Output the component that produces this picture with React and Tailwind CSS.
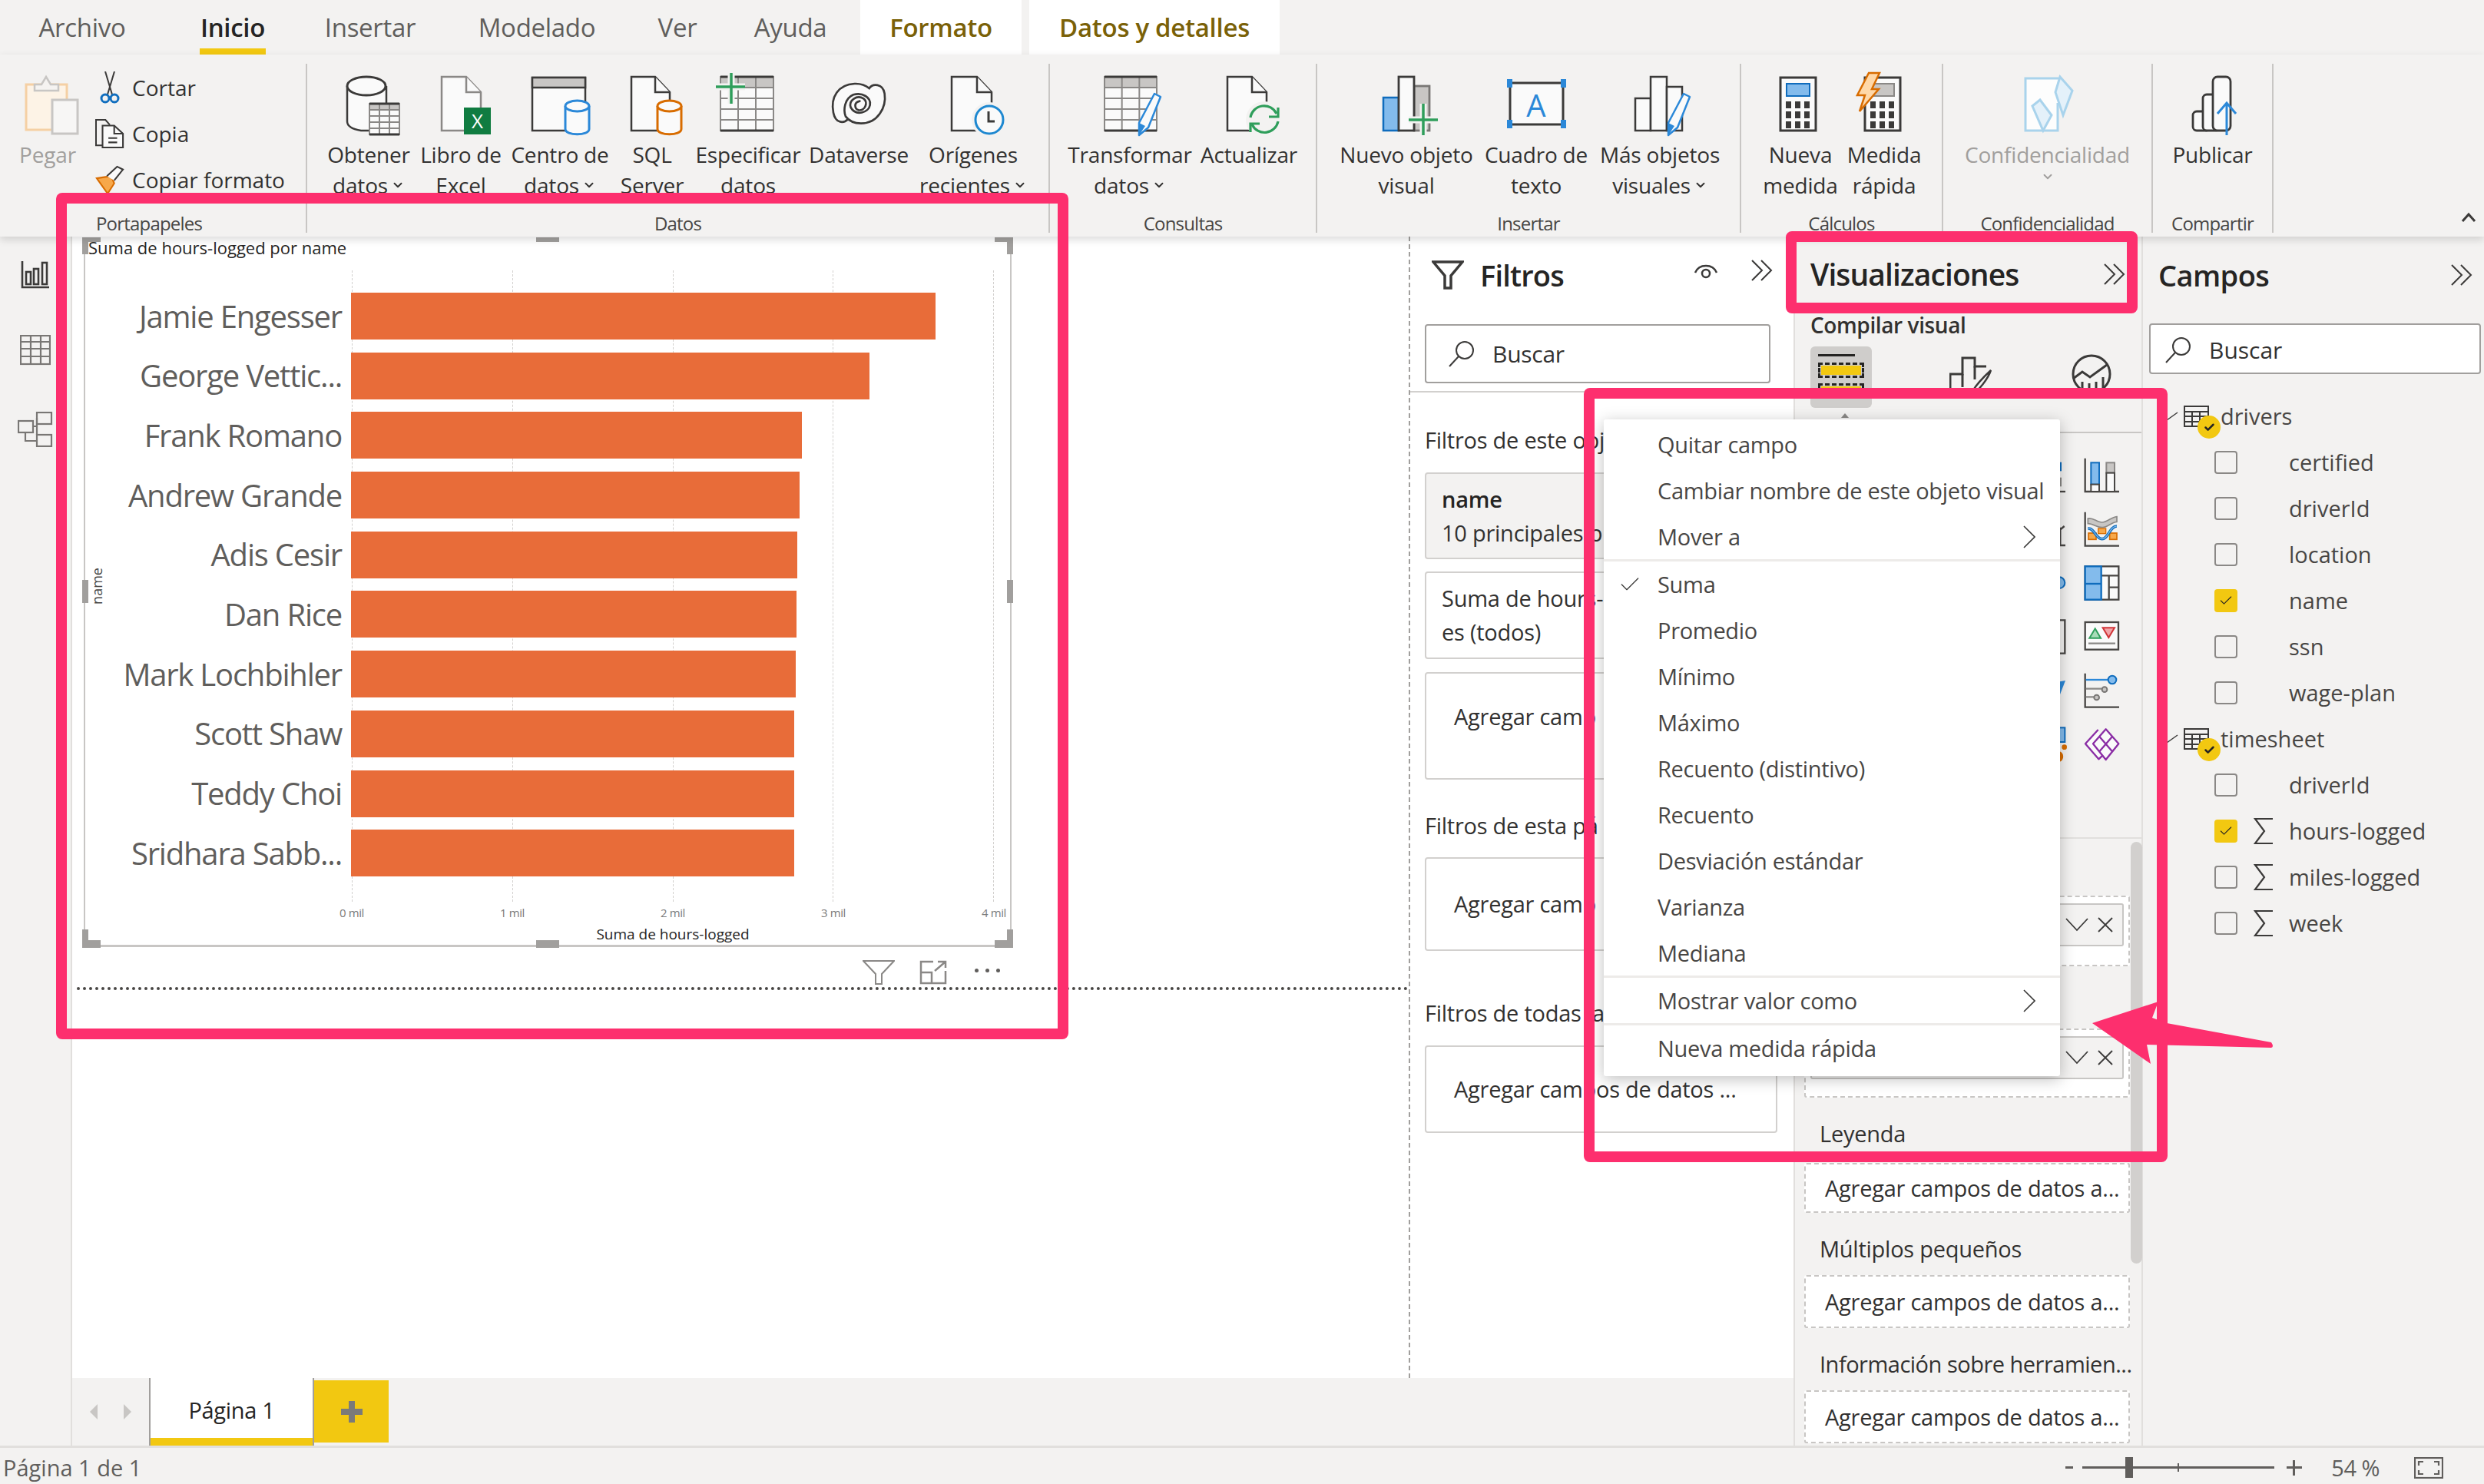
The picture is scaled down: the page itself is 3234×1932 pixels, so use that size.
import React from "react";
import { ChevronDown, Check } from "lucide-react";

const D = "#3b3a39";
const M = "#8a8886";
const L = "#c8c6c4";
const BLUE = "#2b88d8";
const DEEP = "#0f6cbd";
const SKY = "#83bbec";
const GREEN = "#2f9e5b";
const ORANGE = "#d86c00";
const PAPER = "#fafafa";
const BG = "#f3f2f1";

const Box = ({ children }) => (
  <svg width="80" height="80" viewBox="0 0 80 80" fill="none" className="overflow-visible">
    {children}
  </svg>
);

const Doc = ({ x, w = 50, h = 70, c = D }) => (
  <g fill={PAPER} stroke={c} strokeWidth="2.5">
    <path d={`M${x} 2H${x + w - 19}L${x + w} 22V${h + 2}H${x}Z`} strokeLinejoin="miter" />
    <path d={`M${x + w - 19} 2V22H${x + w}`} />
  </g>
);

const Cyl = ({ x, w = 31, c = BLUE }) => (
  <g fill={PAPER} stroke={c} strokeWidth="3">
    <path d={`M${x} 40V70C${x} 79 ${x + w} 79 ${x + w} 70V40`} />
    <ellipse cx={x + w / 2} cy="40" rx={w / 2} ry="7" />
  </g>
);

const Pencil = ({ dx = 0 }) => (
  <g transform={`translate(${dx} 0)`} strokeLinejoin="round">
    <path d="M72 24L80 28L64 68L52 78L52 62Z" fill={PAPER} stroke={BLUE} strokeWidth="2.5" />
    <path d="M52 62L60 66L52 78Z" fill={BLUE} />
  </g>
);

const Grid = ({ x, w, y = 2, h = 70, cols = 3, rows = 4 }) => (
  <g fill={PAPER} stroke={M} strokeWidth="2">
    <rect x={x} y={y} width={w} height={h} />
    <rect x={x} y={y} width={w} height={h / 5} fill={L} />
    {Array.from({ length: cols - 1 }).map((_, i) => (
      <line key={i} x1={x + ((i + 1) * w) / cols} x2={x + ((i + 1) * w) / cols} y1={y} y2={y + h} />
    ))}
    {Array.from({ length: rows - 1 }).map((_, i) => (
      <line key={i} x1={x} x2={x + w} y1={y + h / 5 + ((i + 1) * (h * 0.8)) / rows} y2={y + h / 5 + ((i + 1) * (h * 0.8)) / rows} />
    ))}
    <path d={`M${x} ${y}H${x + w}M${x} ${y + h}H${x + w}`} stroke={D} strokeWidth="3" />
  </g>
);

const Calc = ({ x, blue }) => (
  <g>
    <rect x={x} y="3" width="46" height="69" fill={PAPER} stroke={D} strokeWidth="3" />
    <rect x={x + 8} y="11" width="30" height="16" fill={blue ? SKY : L} stroke={blue ? DEEP : M} strokeWidth="2" />
    {[34, 47, 60].map((y) => (
      <g key={y} fill={D}>
        <rect x={x + 7} y={y} width="7" height="9" />
        <rect x={x + 19} y={y} width="7" height="9" />
        <rect x={x + 31} y={y} width="7" height="9" />
      </g>
    ))}
  </g>
);

const ICONS = {
  obtener: (
    <Box>
      <path d="M12 14V60C12 66 18 70 30 72H44V40H63V14" fill={PAPER} stroke={D} strokeWidth="2.5" />
      <ellipse cx="37" cy="14" rx="25" ry="12" fill={PAPER} stroke={D} strokeWidth="3" />
      <Grid x={41} w={39} y={37} h={40} />
    </Box>
  ),
  excel: (
    <Box>
      <Doc x={15} w={51} c={M} />
      <rect x="44" y="42" width="35" height="35" fill="#107c41" />
      <text x="61.5" y="69" textAnchor="middle" fontSize="26" fill="#fff" fontFamily="Open Sans">X</text>
    </Box>
  ),
  centro: (
    <Box>
      <rect x="4" y="3" width="69" height="69" fill={PAPER} stroke={D} strokeWidth="2.5" />
      <rect x="4" y="3" width="69" height="13" fill={L} stroke={D} strokeWidth="2.5" />
      <Cyl x={47} />
    </Box>
  ),
  sql: (
    <Box>
      <Doc x={13} />
      <Cyl x={47} c={ORANGE} />
    </Box>
  ),
  especificar: (
    <Box>
      <Grid x={4} w={69} />
      <path d="M18 -3V37M-2 15H36" stroke={BG} strokeWidth="9" />
      <path d="M18 -3V37M-2 15H36" stroke={GREEN} strokeWidth="3.5" />
    </Box>
  ),
  dataverse: (
    <Box>
      <g transform="translate(-7 -8) scale(0.3333)" stroke={D} strokeWidth="8" strokeLinecap="round">
        <path
          d="M100 195C80 215 50 210 42 170C30 110 60 60 125 57C150 56 170 65 182 75C195 55 235 55 242 95C250 150 215 212 150 212C125 212 105 205 90 185C80 160 85 115 120 100C155 90 190 110 185 140C180 170 130 185 110 150C100 120 135 100 160 115C180 130 165 165 140 160C125 155 120 130 145 125"
          fill={PAPER}
        />
      </g>
    </Box>
  ),
  origenes: (
    <Box>
      <Doc x={12} w={52} />
      <circle cx="61" cy="58" r="23" fill={BG} />
      <circle cx="61" cy="58" r="18" fill={PAPER} stroke="#1e88d0" strokeWidth="3" />
      <path d="M60 47V60H68" stroke={D} strokeWidth="3" />
    </Box>
  ),
  transformar: (
    <Box>
      <Grid x={7} w={68} />
      <Pencil />
    </Box>
  ),
  actualizar: (
    <Box>
      <Doc x={12} w={51} />
      <circle cx="60" cy="58" r="24" fill={BG} />
      <g stroke={GREEN} strokeWidth="3.2" fill="none">
        <path d="M42 55A18 18 0 0 1 76 50" />
        <path d="M78 42V54H66" />
        <path d="M78 60A18 18 0 0 1 44 64" />
        <path d="M42 74V63H54" />
      </g>
    </Box>
  ),
  nuevo: (
    <Box>
      <rect x="50" y="14" width="20" height="58" fill={L} stroke="#797775" strokeWidth="2.8" />
      <rect x="10" y="29" width="20" height="43" fill={SKY} stroke={DEEP} strokeWidth="2.5" />
      <rect x="30" y="2" width="20" height="70" fill={PAPER} stroke={D} strokeWidth="2.8" />
      <path d="M62 37V78M43 58H81" stroke={BG} strokeWidth="9" />
      <path d="M62 37V78M43 58H81" stroke={GREEN} strokeWidth="3.5" />
    </Box>
  ),
  cuadro: (
    <Box>
      <rect x="6" y="10" width="69" height="54" fill={PAPER} stroke={D} strokeWidth="3" />
      <g fill={BLUE}>
        <rect x="2" y="5" width="7" height="11" />
        <rect x="72" y="5" width="7" height="11" />
        <rect x="2" y="58" width="7" height="11" />
        <rect x="72" y="58" width="7" height="11" />
      </g>
      <text x="40" y="54" textAnchor="middle" fontSize="40" fill={BLUE} fontFamily="Open Sans">A</text>
    </Box>
  ),
  mas: (
    <Box>
      <g stroke={D} strokeWidth="2.5" fill={PAPER}>
        <rect x="8" y="30" width="20" height="42" />
        <rect x="28" y="2" width="21" height="70" />
        <rect x="49" y="15" width="20" height="57" />
      </g>
      <Pencil dx={-1} />
    </Box>
  ),
  medida: (
    <Box>
      <Calc x={14} blue />
    </Box>
  ),
  rapida: (
    <Box>
      <Calc x={15} />
      <path d="M20 -3H34L24 18H33L8 47L15 26H5Z" fill="#ffd8a8" stroke={ORANGE} strokeWidth="2.5" strokeLinejoin="miter" />
    </Box>
  ),
  confid: (
    <Box>
      <path d="M54 4H11V72H53V36" fill="#fdfdfd" stroke="#a9d3ec" strokeWidth="3" />
      <path d="M56 2L72 20L60 52L50 22ZM30 32L45 52L34 72L20 40Z" fill="#e4f1fa" stroke="#a9d3ec" strokeWidth="3" />
    </Box>
  ),
  publicar: (
    <Box>
      <g fill={PAPER} stroke={D} strokeWidth="2.8">
        <rect x="14" y="47" width="22" height="25" rx="5" />
        <rect x="27" y="25" width="22" height="47" rx="5" />
        <rect x="40" y="2" width="23" height="70" rx="6" />
      </g>
      <path d="M58 78V36M46 50L58 36L70 50" stroke={BLUE} strokeWidth="3" fill="none" />
    </Box>
  ),
};

const GROUPS = [
  {
    label: "Datos",
    w: "w-[967px]",
    pad: "pl-[20px]",
    items: [
      { w: "w-[120px]", icon: "obtener", lines: ["Obtener", "datos"], caret: true },
      { w: "w-[120px]", icon: "excel", lines: ["Libro de", "Excel"] },
      { w: "w-[138px]", icon: "centro", lines: ["Centro de", "datos"], caret: true },
      { w: "w-[102px]", icon: "sql", lines: ["SQL", "Server"] },
      { w: "w-[148px]", icon: "especificar", lines: ["Especificar", "datos"] },
      { w: "w-[140px]", icon: "dataverse", lines: ["Dataverse"] },
      { w: "w-[158px]", icon: "origenes", lines: ["Orígenes", "recientes"], caret: true },
    ],
  },
  {
    label: "Consultas",
    w: "w-[348px]",
    pad: "pl-[24px]",
    items: [
      { w: "w-[160px]", icon: "transformar", lines: ["Transformar", "datos"], caret: true },
      { w: "w-[150px]", icon: "actualizar", lines: ["Actualizar"] },
    ],
  },
  {
    label: "Insertar",
    w: "w-[552px]",
    pad: "pl-[26px]",
    items: [
      { w: "w-[180px]", icon: "nuevo", lines: ["Nuevo objeto", "visual"] },
      { w: "w-[158px]", icon: "cuadro", lines: ["Cuadro de", "texto"] },
      { w: "w-[164px]", icon: "mas", lines: ["Más objetos", "visuales"], caret: true },
    ],
  },
  {
    label: "Cálculos",
    w: "w-[263px]",
    pad: "pl-[24px]",
    items: [
      { w: "w-[106px]", icon: "medida", lines: ["Nueva", "medida"] },
      { w: "w-[112px]", icon: "rapida", lines: ["Medida", "rápida"] },
    ],
  },
  {
    label: "Confidencialidad",
    w: "w-[273px]",
    pad: "",
    items: [{ w: "w-[272px]", icon: "confid", lines: ["Confidencialidad", ""], caret: true, muted: true }],
  },
  {
    label: "Compartir",
    w: "w-[157px]",
    pad: "",
    items: [{ w: "w-[156px]", icon: "publicar", lines: ["Publicar"] }],
  },
];

const Caret = ({ muted }) => (
  <ChevronDown size={18} strokeWidth={2.5} className={muted ? "text-[#a19f9d]" : "text-[#323130]"} />
);

function RibbonButton({ item }) {
  return (
    <div className={`${item.w} flex flex-col items-center`}>
      {ICONS[item.icon]}
      <div className={`mt-[3px] flex flex-col items-center whitespace-nowrap text-[28px] leading-[40px] tracking-[-0.2px] ${item.muted ? "text-[#a19f9d]" : "text-[#323130]"}`}>
        {item.lines.map((line, i) => (
          <span key={i} className="flex items-center gap-[4px]">
            {line}
            {item.caret && i === 1 && <Caret muted={item.muted} />}
          </span>
        ))}
      </div>
    </div>
  );
}

function RibbonGroup({ label, w, pad, items }) {
  return (
    <div className={`${w} h-[220px] flex flex-col border-r-2 border-[#c8c6c4]`}>
      <div className={`flex pt-[15px] ${pad} ${pad ? "" : "justify-center"}`}>
        {items.map((item) => (
          <RibbonButton key={item.icon} item={item} />
        ))}
      </div>
      <div className="mt-auto pb-[2px] text-center text-[24px] leading-[20px] tracking-[-0.8px] text-[#484644]">{label}</div>
    </div>
  );
}

const TABS = [
  { label: "Archivo", w: "w-[214px]", cls: "text-[#605e5c]" },
  { label: "Inicio", w: "w-[178px]", cls: "text-[#252423] font-semibold", active: true },
  { label: "Insertar", w: "w-[180px]", cls: "text-[#605e5c]" },
  { label: "Modelado", w: "w-[254px]", cls: "text-[#605e5c]" },
  { label: "Ver", w: "w-[112px]", cls: "text-[#605e5c]" },
  { label: "Ayuda", w: "w-[182px]", cls: "text-[#605e5c]" },
  { label: "Formato", w: "w-[210px]", cls: "bg-white text-[#7a6108] font-semibold" },
  { label: "Datos y detalles", w: "w-[326px] ml-[10px]", cls: "bg-white text-[#7a6108] font-semibold" },
];

function TabBar() {
  return (
    <div className="flex h-[71px] shrink-0">
      {TABS.map((t) => (
        <div key={t.label} className={`${t.w} ${t.cls} relative flex items-center justify-center text-[33px] tracking-[-0.3px]`}>
          {t.label}
          {t.active && <div className="absolute bottom-0 left-[46px] h-[8px] w-[86px] bg-[#f2c811]" />}
        </div>
      ))}
    </div>
  );
}

function Clipboard() {
  const rows = [
    {
      text: "Cortar",
      icon: (
        <svg width="30" height="42" viewBox="0 0 30 42" fill="none">
          <path d="M9 0L18 30M21 0L12 30" stroke={D} strokeWidth="2" />
          <circle cx="9" cy="35" r="5" stroke="#106ebe" strokeWidth="3" />
          <circle cx="21" cy="35" r="5" stroke="#106ebe" strokeWidth="3" />
        </svg>
      ),
    },
    {
      text: "Copia",
      icon: (
        <svg width="40" height="40" viewBox="0 0 40 40" fill="none" stroke={D} strokeWidth="2.2">
          <path d="M10 36H1V1H14L20 8" />
          <path d="M10 9H26L38 20V39H10Z" fill={PAPER} />
          <path d="M26 9V20H38M18 26H30M18 32H30" />
        </svg>
      ),
    },
    {
      text: "Copiar formato",
      icon: (
        <svg width="40" height="38" viewBox="0 0 40 38" fill="none">
          <path d="M2 17L22 14L26 24L17 38Z" fill="#f7a84a" stroke={ORANGE} strokeWidth="2.2" />
          <path d="M16 14L30 1L38 5L26 20" fill={PAPER} stroke={D} strokeWidth="2.2" />
        </svg>
      ),
    },
  ];
  return (
    <div className="w-[400px] h-[220px] flex flex-col border-r-2 border-[#c8c6c4]">
      <div className="flex">
        <div className="w-[124px] flex flex-col items-center pt-[15px]">
          <Box>
            <rect x="12" y="12" width="53" height="59" fill="#fdf3e6" stroke="#f5d0a4" strokeWidth="3" />
            <path d="M23 20V12H32L38 2L44 12H54V20Z" fill="#f5f3f1" stroke="#c8c6c4" strokeWidth="2.5" />
            <rect x="46" y="32" width="33" height="44" fill="#f7f6f5" stroke="#c8c6c4" strokeWidth="3" />
          </Box>
          <div className="mt-[3px] text-[28px] leading-[40px] tracking-[-0.2px] text-[#a19f9d]">Pegar</div>
        </div>
        <div className="flex flex-col pt-[1px]">
          {rows.map((r) => (
            <div key={r.text} className="flex h-[60px] items-center">
              <div className="flex w-[48px] justify-center pr-[10px]">{r.icon}</div>
              <span className="whitespace-nowrap text-[28px] tracking-[0px] text-[#323130]">{r.text}</span>
            </div>
          ))}
        </div>
      </div>
      <div className="mt-auto pb-[2px] pr-[10px] text-center text-[24px] leading-[20px] tracking-[-0.8px] text-[#484644]">Portapapeles</div>
    </div>
  );
}

function Ribbon() {
  return (
    <div className="relative z-10 flex h-[237px] shrink-0 bg-[#f3f2f1] pt-[12px] shadow-[0_4px_10px_rgba(0,0,0,0.14)]">
      <Clipboard />
      {GROUPS.map((g) => (
        <RibbonGroup key={g.label} {...g} />
      ))}
      <svg width="20" height="14" viewBox="0 0 20 14" fill="none" className="absolute right-[10px] top-[205px]">
        <path d="M2 12L10 3L18 12" stroke={D} strokeWidth="3" />
      </svg>
    </div>
  );
}

function Rail() {
  return (
    <div className="flex w-[94px] shrink-0 flex-col items-center border-r-2 border-[#e1dfdd] bg-[#f3f2f1] pt-[32px]">
      <svg width="38" height="36" viewBox="0 0 38 36" fill="none" stroke={D} strokeWidth="2.6">
        <path d="M2 0V34H37" />
        <rect x="7" y="14" width="6" height="16" />
        <rect x="17" y="10" width="6" height="20" />
        <rect x="28" y="2" width="6" height="28" />
      </svg>
      <svg width="40" height="40" viewBox="0 0 40 40" fill="none" stroke="#797775" strokeWidth="2.2" className="mt-[60px]">
        <rect x="1" y="1" width="38" height="37" />
        <path d="M1 9H39M1 18H39M1 28H39M14 1V38M27 1V38" />
      </svg>
      <svg width="46" height="46" viewBox="0 0 46 46" fill="none" stroke="#797775" strokeWidth="2.2" className="mt-[60px]">
        <rect x="25" y="1" width="19" height="15" />
        <rect x="1" y="12" width="19" height="15" />
        <rect x="25" y="30" width="19" height="15" />
        <path d="M20 19H25V8M10 27V38H25M25 16V30" />
      </svg>
    </div>
  );
}

const BARS = [
  { name: "Jamie Engesser", hours: 3645 },
  { name: "George Vettic...", hours: 3234 },
  { name: "Frank Romano", hours: 2812 },
  { name: "Andrew Grande", hours: 2798 },
  { name: "Adis Cesir", hours: 2783 },
  { name: "Dan Rice", hours: 2777 },
  { name: "Mark Lochbihler", hours: 2773 },
  { name: "Scott Shaw", hours: 2764 },
  { name: "Teddy Choi", hours: 2764 },
  { name: "Sridhara Sabb...", hours: 2764 },
];
const PX_PER_HOUR = 835 / 4000;

function Visual() {
  const h = "absolute bg-[#a19f9d]";
  return (
    <div className="relative ml-[15px] mt-[1px] h-[924px] w-[1208px] shrink-0 border-x-2 border-b-[3px] border-[#c8c6c4]">
      <div className="pl-[4px] text-[22px] leading-[26px] tracking-[0px] text-[#252423]">Suma de hours-logged por name</div>

      {/* gridlines */}
      <div className="absolute left-[347px] top-[43px] flex h-[822px] w-[836px] justify-between">
        {[0, 1, 2, 3, 4].map((t) => (
          <div key={t} className="w-0 border-l border-dashed border-[#d2d0ce]" />
        ))}
      </div>

      <div className="relative flex flex-col gap-[16.7px] pt-[46px]">
        {BARS.map((b) => (
          <div key={b.name} className="flex h-[61px] items-center">
            <div className="w-[334px] whitespace-nowrap text-right text-[40px] tracking-[-1.2px] text-[#605e5c]">{b.name}</div>
            <div className="ml-[12px] h-full bg-[#e86c39]" style={{ width: `${b.hours * PX_PER_HOUR}px` }} />
          </div>
        ))}
      </div>

      <div className="ml-[347px] mt-[37px] flex w-[836px] justify-between">
        {["0 mil", "1 mil", "2 mil", "3 mil", "4 mil"].map((t) => (
          <div key={t} className="flex w-0 justify-center whitespace-nowrap text-[15px] leading-[20px] tracking-[-0.4px] text-[#7a7a7a]">
            {t}
          </div>
        ))}
      </div>
      <div className="ml-[347px] mt-[6px] w-[836px] text-center text-[19px] leading-[24px] text-[#252423]">Suma de hours-logged</div>

      <div className="absolute -left-[9px] top-[445px] origin-center -rotate-90 text-[18px] leading-[18px] text-[#484644]">name</div>

      {/* resize handles */}
      <div className={`${h} -left-[4px] top-0 h-[22px] w-[8px]`} />
      <div className={`${h} -left-[4px] top-0 h-[6px] w-[24px]`} />
      <div className={`${h} left-[587px] top-0 h-[6px] w-[30px]`} />
      <div className={`${h} -right-[4px] top-0 h-[22px] w-[8px]`} />
      <div className={`${h} -right-[4px] top-0 h-[6px] w-[24px]`} />
      <div className={`${h} -left-[4px] top-[446px] h-[30px] w-[8px]`} />
      <div className={`${h} -right-[4px] top-[446px] h-[30px] w-[8px]`} />
      <div className={`${h} -bottom-[4px] -left-[4px] h-[24px] w-[8px]`} />
      <div className={`${h} -bottom-[4px] -left-[4px] h-[10px] w-[24px]`} />
      <div className={`${h} -bottom-[4px] left-[587px] h-[10px] w-[30px]`} />
      <div className={`${h} -bottom-[4px] -right-[4px] h-[24px] w-[8px]`} />
      <div className={`${h} -bottom-[4px] -right-[4px] h-[10px] w-[24px]`} />
    </div>
  );
}

function Canvas() {
  return (
    <div className="flex w-[1740px] shrink-0 flex-col bg-white">
      <Visual />
      <div className="flex h-[52px] shrink-0 items-center pl-[1029px] pt-[14px]">
        <svg width="42" height="34" viewBox="0 0 42 34" fill="none" stroke="#8a8886" strokeWidth="2">
          <path d="M1 2H41L25 19V32H17V19Z" />
        </svg>
        <svg width="36" height="32" viewBox="0 0 36 32" fill="none" stroke="#8a8886" strokeWidth="2.5" className="ml-[32px]">
          <path d="M18 2H2V30H34V14" />
          <path d="M20 14L34 2M24 2H34V10M2 16H16V30" />
        </svg>
        <div className="ml-[36px] flex gap-[9px] pb-[6px]">
          <div className="h-[5px] w-[5px] rounded-full bg-[#605e5c]" />
          <div className="h-[5px] w-[5px] rounded-full bg-[#605e5c]" />
          <div className="h-[5px] w-[5px] rounded-full bg-[#605e5c]" />
        </div>
      </div>
      <div className="ml-[6px] border-t-4 border-dotted border-[#484644]" />
    </div>
  );
}

const Search = ({ cls }) => (
  <div className={`${cls} flex items-center rounded-[4px] border-2 border-[#a19f9d] bg-white text-[30px] text-[#323130]`}>
    <svg width="36" height="36" viewBox="0 0 36 36" fill="none" stroke={D} strokeWidth="2">
      <circle cx="22" cy="13" r="11" />
      <path d="M14 21L2 34" />
    </svg>
    <span className="ml-[22px]">Buscar</span>
  </div>
);

const Chevrons = () => (
  <svg width="30" height="30" viewBox="0 0 30 30" fill="none" stroke={D} strokeWidth="2">
    <path d="M2 2L15 15L2 28M14 2L27 15L14 28" />
  </svg>
);

const cardCls = "w-[450px] shrink-0 rounded-[4px] border-2 border-[#d2d0ce] bg-white";
const bodyText = "text-[29px] tracking-[-0.25px]";

function FilterPane() {
  return (
    <div className={`flex w-[501px] shrink-0 flex-col border-l-2 border-dashed border-[#a19f9d] bg-white pl-[19px] text-[#323130] ${bodyText}`}>
      <div className="flex h-[100px] items-center">
        <svg width="42" height="38" viewBox="0 0 42 38" fill="none" stroke={D} strokeWidth="3.5" className="ml-[9px]">
          <path d="M2 2H40L25 20V36H17V20Z" />
        </svg>
        <span className="ml-[21px] w-[146px] text-[38px] font-semibold tracking-[-0.8px] text-[#252423]">Filtros</span>
        <svg width="34" height="26" viewBox="0 0 34 26" fill="none" stroke={D} strokeWidth="2.5" className="ml-[131px] -mt-[12px]">
          <path d="M3 16C8 4 26 4 31 16" />
          <circle cx="17" cy="17" r="5" />
        </svg>
        <div className="ml-[41px] -mt-[12px]">
          <Chevrons />
        </div>
      </div>
      <Search cls="mt-[14px] h-[77px] w-[450px] shrink-0 pl-[28px]" />
      <div className="-ml-[19px] mt-[10px] border-b-2 border-[#d2d0ce]" />
      <div className="mt-[42px] whitespace-nowrap leading-[40px]">Filtros de este obj</div>
      <div className="mt-[22px] h-[113px] w-[450px] shrink-0 rounded-[4px] border-2 border-[#d2d0ce] bg-[#f3f2f1] pl-[20px] pt-[11px] leading-[44px]">
        <div className="font-semibold text-[#252423]">name</div>
        <div className="whitespace-nowrap">10 principales p</div>
      </div>
      <div className={`mt-[16px] h-[114px] ${cardCls} pl-[20px] pt-[11px] leading-[44px]`}>
        <div className="whitespace-nowrap">Suma de hours-</div>
        <div>es (todos)</div>
      </div>
      <div className={`mt-[17px] h-[140px] ${cardCls} pl-[36px] pt-[34px] leading-[44px]`}>
        <div className="whitespace-nowrap">Agregar camp</div>
      </div>
      <div className="mt-[40px] whitespace-nowrap leading-[40px]">Filtros de esta pá</div>
      <div className={`mt-[21px] flex h-[122px] ${cardCls} items-center pl-[36px]`}>
        <div className="whitespace-nowrap">Agregar camp</div>
      </div>
      <div className="mt-[61px] whitespace-nowrap leading-[40px]">Filtros de todas la</div>
      <div className="mt-[22px] flex h-[114px] w-[459px] shrink-0 items-center whitespace-nowrap rounded-[4px] border-2 border-[#d2d0ce] bg-white pl-[36px]">Agregar campos de datos ...</div>
    </div>
  );
}

function PageTabs() {
  return (
    <div className="flex h-[88px] shrink-0 items-start bg-[#f3f2f1]">
      <div className="flex h-full w-[100px] items-center justify-center gap-[34px]">
        <div className="h-0 w-0 border-y-[10px] border-r-[10px] border-y-transparent border-r-[#c8c6c4]" />
        <div className="h-0 w-0 border-y-[10px] border-l-[10px] border-y-transparent border-l-[#c8c6c4]" />
      </div>
      <div className="flex h-full w-[215px] flex-col border-x-2 border-[#a19f9d] bg-white">
        <div className="flex flex-1 items-center justify-center pt-[6px] text-[29px] font-medium tracking-[-0.3px] text-[#252423]">Página 1</div>
        <div className="h-[10px] bg-[#f2c811]" />
      </div>
      <div className="mt-[3px] flex h-[81px] w-[97px] items-center justify-center bg-[#f2c811]">
        <svg width="28" height="28" viewBox="0 0 28 28" fill="#7a7a7a">
          <rect x="10" y="0" width="8" height="28" />
          <rect x="0" y="10" width="28" height="8" />
        </svg>
      </div>
    </div>
  );
}

const Dash = ({ cls, children }) => (
  <div className={`${cls} relative ml-[12px] w-[424px] shrink-0 rounded-[3px] border-2 border-dashed border-[#c8c6c4] bg-white`}>{children}</div>
);

const AddField = ({ cls }) => (
  <Dash cls={`${cls} flex items-center pl-[25px] whitespace-nowrap ${bodyText} text-[#323130]`}>Agregar campos de datos a...</Dash>
);

const Pill = () => (
  <div className="absolute left-[6px] top-[8px] flex h-[56px] w-[408px] items-center justify-end gap-[12px] rounded-[3px] border-2 border-[#c8c6c4] bg-[#f3f2f1] pr-[12px]">
    <svg width="30" height="18" viewBox="0 0 30 18" fill="none" stroke={D} strokeWidth="1.8">
      <path d="M1 1L15 16L29 1" />
    </svg>
    <svg width="20" height="20" viewBox="0 0 20 20" fill="none" stroke={D} strokeWidth="1.8">
      <path d="M1 1L19 19M19 1L1 19" />
    </svg>
  </div>
);

// drawn in the reference's crop units, three of them to a page pixel
const SideIcon = ({ top, stub, children }) => (
  <div className="mb-[25px] flex h-[45px] items-center justify-end gap-[25px] pr-[28px]">
    <svg width="8" height="45" viewBox="0 0 8 45" fill="none" className="overflow-visible">
      <g transform={`scale(0.3333) translate(-38 ${-top})`}>{stub}</g>
    </svg>
    <svg width="46" height="45" viewBox="0 0 46 45" fill="none" className="overflow-visible">
      <g transform={`scale(0.3333) translate(-137 ${-top})`}>{children}</g>
    </svg>
  </div>
);

const AX = "#484644";

function VizPane() {
  return (
    <div className="relative flex w-[453px] shrink-0 flex-col border-l-2 border-[#e1dfdd] bg-[#f3f2f1]">
      <div className="flex h-[98px] shrink-0 items-center pl-[20px] pr-[20px]">
        <span className="text-[39px] font-semibold tracking-[-0.9px] text-[#252423]">Visualizaciones</span>
        <div className="ml-auto">
          <Chevrons />
        </div>
      </div>
      <div className="pl-[20px] text-[28px] font-semibold leading-[34px] tracking-[-0.4px] text-[#323130]">Compilar visual</div>
      <div className="mt-[11px] flex h-[79px] shrink-0 items-start pl-[20px]">
        <div className="flex h-[80px] w-[80px] flex-col rounded-[6px] bg-[#cfcdcb] pl-[10px] pt-[10px]">
          <div className="h-[3px] w-[48px] bg-[#252423]" />
          <div className="mt-[8px] h-[20px] w-[60px] border-[3px] border-dashed border-[#252423] p-[1px]">
            <div className="h-full bg-[#f2c811]" />
          </div>
          <div className="mt-[7px] h-[20px] w-[60px] border-[3px] border-dashed border-[#252423] p-[1px]">
            <div className="h-full bg-[#f2c811]" />
          </div>
        </div>
        <svg width="56" height="56" viewBox="0 0 56 56" fill="none" stroke={D} strokeWidth="3" className="ml-[101px] mt-[13px]">
          <path d="M1 55V23H17V2H33V13H48" />
          <path d="M17 23V40M33 13V30" />
          <path d="M54 18C50 30 38 44 30 50C24 56 28 42 54 18Z" strokeWidth="2.4" />
        </svg>
        <svg width="56" height="60" viewBox="0 0 56 60" fill="none" stroke={D} strokeWidth="3" className="ml-[101px] mt-[10px]">
          <circle cx="28" cy="26" r="24" />
          <path d="M4 32L16 23L26 30L48 14" />
          <path d="M16 36V52M25 38V52M34 36V52M43 30V52" />
        </svg>
      </div>
      <div className="h-[32px] shrink-0 pl-[60px] pt-[8px]">
        <div className="h-0 w-0 border-x-[5px] border-b-[6px] border-x-transparent border-b-[#8a8886]" />
      </div>
      <div className="h-[2px] shrink-0 bg-[#c8c6c4]" />
      <div className="flex flex-col pt-[32px]">
        <SideIcon
          top={18}
          stub={
            <>
              <rect x="40" y="35" width="7" height="35" fill={DEEP} />
              <rect x="40" y="95" width="7" height="35" fill={M} />
              <path d="M40 150H62" stroke={AX} strokeWidth="7" />
            </>
          }
        >
          <path d="M139 20V150H272" stroke={AX} strokeWidth="7" />
          <rect x="162" y="37" width="32" height="85" fill={SKY} stroke={DEEP} strokeWidth="6" />
          <rect x="162" y="122" width="32" height="28" fill={PAPER} stroke={AX} strokeWidth="6" />
          <rect x="222" y="37" width="32" height="40" fill={L} stroke={M} strokeWidth="6" />
          <rect x="222" y="77" width="32" height="73" fill={PAPER} stroke={AX} strokeWidth="6" />
        </SideIcon>
        <SideIcon top={228} stub={<path d="M40 300L58 285M42 290V360H62" stroke={AX} strokeWidth="7" />}>
          <path d="M139 230V362H272" stroke={AX} strokeWidth="7" />
          <path d="M150 255C170 250 185 270 205 270C225 270 240 250 263 248V268C240 270 225 292 205 290C185 290 170 275 150 275Z" fill={L} stroke={M} strokeWidth="5" />
          <rect x="152" y="312" width="30" height="25" fill="#f7a84a" stroke={ORANGE} strokeWidth="5" />
          <rect x="190" y="294" width="30" height="20" fill="#f7a84a" stroke={ORANGE} strokeWidth="4" />
          <rect x="235" y="312" width="28" height="25" fill="#f7a84a" stroke={ORANGE} strokeWidth="5" />
          <path d="M150 295C175 290 180 335 205 335C230 335 235 285 263 285" stroke={DEEP} strokeWidth="11" />
          <path d="M150 295C175 290 180 335 205 335C230 335 235 285 263 285" stroke={SKY} strokeWidth="3.5" />
        </SideIcon>
        <SideIcon top={438} stub={<path d="M38 484A22 22 0 0 1 38 528Z" fill={SKY} stroke={DEEP} strokeWidth="6" />}>
          <rect x="139" y="442" width="131" height="130" fill={PAPER} stroke={AX} strokeWidth="7" />
          <path d="M202 478H270M232 478V572M232 524H270" stroke={AX} strokeWidth="7" />
          <rect x="139" y="442" width="63" height="130" fill={SKY} stroke={DEEP} strokeWidth="7" />
          <path d="M139 510H202" stroke={DEEP} strokeWidth="7" />
        </SideIcon>
        <SideIcon top={648} stub={<path d="M40 652H60V782H40" stroke={AX} strokeWidth="7" />}>
          <rect x="139" y="660" width="130" height="107" fill={PAPER} stroke={AX} strokeWidth="7" />
          <path d="M178 685L200 722H156Z" fill="#a9dbb8" stroke={GREEN} strokeWidth="6" />
          <path d="M208 682H254L231 720Z" fill="#f1a5a8" stroke="#d13438" strokeWidth="6" />
          <path d="M152 743H257" stroke={M} strokeWidth="7" />
        </SideIcon>
        <SideIcon top={858} stub={<path d="M62 888L40 892V945Z" fill={BLUE} />}>
          <path d="M139 860V992H272" stroke={AX} strokeWidth="7" />
          <path d="M142 885H230" stroke={BLUE} strokeWidth="7" />
          <circle cx="245" cy="885" r="16" fill={SKY} stroke={DEEP} strokeWidth="6" />
          <path d="M142 920H205M142 952H175" stroke={M} strokeWidth="7" />
          <circle cx="215" cy="923" r="10" fill={L} stroke="#797775" strokeWidth="6" />
          <circle cx="184" cy="954" r="10" fill={L} stroke="#797775" strokeWidth="6" />
        </SideIcon>
        <SideIcon
          top={1068}
          stub={
            <>
              <rect x="38" y="1072" width="22" height="56" fill={SKY} stroke={DEEP} strokeWidth="6" />
              <circle cx="58" cy="1148" r="10" fill={ORANGE} />
              <path d="M38 1164A22 22 0 0 1 38 1206Z" fill={ORANGE} />
            </>
          }
        >
          <path d="M190 1080L140 1135L192 1195L210 1178" fill={PAPER} stroke="#8a2da5" strokeWidth="7" strokeLinejoin="round" />
          <path d="M220 1078L270 1135L220 1197L170 1135Z" fill={PAPER} stroke="#8a2da5" strokeWidth="7" strokeLinejoin="round" />
          <path d="M195 1107L245 1165M245 1107L195 1165" stroke="#8a2da5" strokeWidth="7" />
        </SideIcon>
      </div>
      <div className="mt-[74px] h-[2px] shrink-0 bg-[#e1dfdd]" />
      <Dash cls="mt-[74px] h-[92px]">
        <Pill />
      </Dash>
      <Dash cls="mt-[81px] h-[90px]">
        <Pill />
      </Dash>
      <div className={`ml-[32px] mt-[27px] leading-[40px] text-[#323130] ${bodyText}`}>Leyenda</div>
      <AddField cls="mt-[18px] h-[65px]" />
      <div className={`ml-[32px] mt-[27px] leading-[40px] text-[#323130] ${bodyText}`}>Múltiplos pequeños</div>
      <AddField cls="mt-[14px] h-[69px]" />
      <div className="ml-[32px] mt-[27px] whitespace-nowrap text-[29px] leading-[40px] tracking-[-0.5px] text-[#323130]">Información sobre herramien...</div>
      <AddField cls="mt-[14px] h-[69px]" />
      <div className="absolute left-[437px] top-[788px] h-[549px] w-[15px] rounded-full bg-[#d2d0ce]" />
    </div>
  );
}

const FIELD_TABLES = [
  {
    name: "drivers",
    fields: [
      { name: "certified" },
      { name: "driverId" },
      { name: "location" },
      { name: "name", on: true },
      { name: "ssn" },
      { name: "wage-plan" },
    ],
  },
  {
    name: "timesheet",
    fields: [
      { name: "driverId" },
      { name: "hours-logged", on: true, sum: true },
      { name: "miles-logged", sum: true },
      { name: "week", sum: true },
    ],
  },
];

function FieldsPane() {
  return (
    <div className="flex flex-1 flex-col border-l-2 border-[#e1dfdd] bg-[#f3f2f1] text-[#323130]">
      <div className="flex h-[100px] shrink-0 items-center pl-[20px] pr-[14px]">
        <span className="text-[38px] font-semibold tracking-[-0.6px] text-[#252423]">Campos</span>
        <div className="ml-auto">
          <Chevrons />
        </div>
      </div>
      <Search cls="ml-[8px] mr-[4px] mt-[13px] h-[66px] shrink-0 pl-[18px] pt-[3px]" />
      <div className="mt-[25px] flex flex-col text-[29px]">
        {FIELD_TABLES.map((t) => (
          <div key={t.name} className="flex flex-col">
            <div className="flex h-[60px] items-center pl-[30px]">
              <svg width="16" height="12" viewBox="0 0 16 12" fill="none" stroke={D} strokeWidth="1.5">
                <path d="M1 11L15 1" />
              </svg>
              <div className="relative ml-[7px] h-[28px] w-[33px]">
                <svg width="33" height="28" viewBox="0 0 33 28" fill="none" stroke={D} strokeWidth="2">
                  <rect x="1" y="1" width="31" height="26" />
                  <path d="M1 8H32M1 14H32M1 21H32M11 8V27M21 8V27" />
                </svg>
                <div className="absolute -bottom-[15px] left-[18px] flex h-[30px] w-[30px] items-center justify-center rounded-full bg-[#f2c811]">
                  <Check size={15} strokeWidth={4} color="#252423" />
                </div>
              </div>
              <span className="ml-[15px] text-[#484644]">{t.name}</span>
            </div>
            {t.fields.map((f) => (
              <div key={f.name} className="flex h-[60px] items-center pl-[93px]">
                <div className={`flex h-[30px] w-[30px] items-center justify-center rounded-[4px] ${f.on ? "bg-[#f2c811]" : "border-2 border-[#8a8886]"}`}>
                  {f.on && <Check size={20} strokeWidth={1.3} color="#252423" />}
                </div>
                <div className="flex w-[67px] justify-end pr-[20px]">
                  {f.sum && (
                    <svg width="26" height="36" viewBox="0 0 26 36" fill="none" stroke={D} strokeWidth="2.2">
                      <path d="M25 2H2L14 18L2 34H25" />
                    </svg>
                  )}
                </div>
                <span className="text-[#484644]">{f.name}</span>
              </div>
            ))}
          </div>
        ))}
      </div>
    </div>
  );
}

function StatusBar() {
  return (
    <div className="flex h-[50px] shrink-0 items-center border-t-[3px] border-[#e1dfdd] bg-[#f3f2f1] pl-[4px] pr-[53px] pt-[4px] text-[#605e5c]">
      <span className="text-[29px]">Página 1 de 1</span>
      <span className="ml-auto mr-[12px] h-[3px] w-[10px] bg-[#605e5c]" />
      <div className="relative h-[3px] w-[250px] bg-[#605e5c]">
        <div className="absolute -top-[12px] left-[56px] h-[27px] w-[10px] bg-[#605e5c]" />
        <div className="absolute -top-[4px] left-[124px] h-[11px] w-[2px] bg-[#605e5c]" />
      </div>
      <svg width="20" height="20" viewBox="0 0 20 20" fill="#605e5c" className="ml-[16px]">
        <rect x="8" y="0" width="3" height="20" />
        <rect x="0" y="8" width="20" height="3" />
      </svg>
      <span className="ml-[38px] text-[29px] tracking-[-0.5px]">54 %</span>
      <svg width="38" height="28" viewBox="0 0 38 28" fill="none" stroke="#605e5c" strokeWidth="2.2" className="ml-[45px]">
        <rect x="1" y="1" width="36" height="26" />
        <path d="M6 11V6H12M32 11V6H26M6 17V22H12M32 17V22H26" />
      </svg>
    </div>
  );
}

const MENU = [
  { text: "Quitar campo" },
  { text: "Cambiar nombre de este objeto visual" },
  { text: "Mover a", arrow: true, sep: true },
  { text: "Suma", check: true },
  { text: "Promedio" },
  { text: "Mínimo" },
  { text: "Máximo" },
  { text: "Recuento (distintivo)" },
  { text: "Recuento" },
  { text: "Desviación estándar" },
  { text: "Varianza" },
  { text: "Mediana", sep: true },
  { text: "Mostrar valor como", arrow: true, sep: true },
  { text: "Nueva medida rápida" },
];

function ContextMenu() {
  return (
    <div className="absolute left-[2088px] top-[546px] z-30 flex w-[594px] flex-col rounded-[3px] bg-white pb-[6px] pt-[3px] shadow-[0_4px_20px_rgba(0,0,0,0.25)]">
      {MENU.map((m) => (
        <div key={m.text} className={`relative flex shrink-0 items-center pl-[70px] pr-[32px] text-[29px] tracking-[-0.3px] text-[#484644] ${m.sep ? "h-[62px] border-b-[3px] border-[#edebe9]" : "h-[60px]"}`}>
          {m.check && <Check size={32} strokeWidth={1} color={D} className="absolute left-[18px]" />}
          <span className="whitespace-nowrap">{m.text}</span>
          {m.arrow && (
            <svg width="16" height="30" viewBox="0 0 16 30" fill="none" stroke={D} strokeWidth="1.6" className="ml-auto">
              <path d="M1 1L15 15L1 29" />
            </svg>
          )}
        </div>
      ))}
    </div>
  );
}

function Annotations() {
  const pink = "absolute z-40 rounded-[8px] border-[14px] border-[#fd2f6e]";
  return (
    <>
      <div className={`${pink} left-[73px] top-[251px] h-[1102px] w-[1318px]`} />
      <div className={`${pink} left-[2325px] top-[301px] h-[107px] w-[458px]`} />
      <div className={`${pink} left-[2062px] top-[505px] h-[1008px] w-[760px]`} />
      <svg width="260" height="100" viewBox="0 0 260 100" className="absolute left-[2710px] top-[1295px] z-50">
        <path d="M14 37L100 9L92 30L111 37L247 62Q251 68 247 69L85 65L90 90Z" fill="#fd2f6e" />
      </svg>
    </>
  );
}

export default function App() {
  return (
    <div className="relative flex h-[1932px] w-[3234px] flex-col overflow-hidden bg-[#f3f2f1] font-['Open_Sans',sans-serif]">
      <TabBar />
      <Ribbon />
      <div className="flex min-h-0 flex-1">
        <Rail />
        <div className="flex w-[2241px] shrink-0 flex-col">
          <div className="flex min-h-0 flex-1">
            <Canvas />
            <FilterPane />
          </div>
          <PageTabs />
        </div>
        <VizPane />
        <FieldsPane />
      </div>
      <StatusBar />
      <ContextMenu />
      <Annotations />
    </div>
  );
}
